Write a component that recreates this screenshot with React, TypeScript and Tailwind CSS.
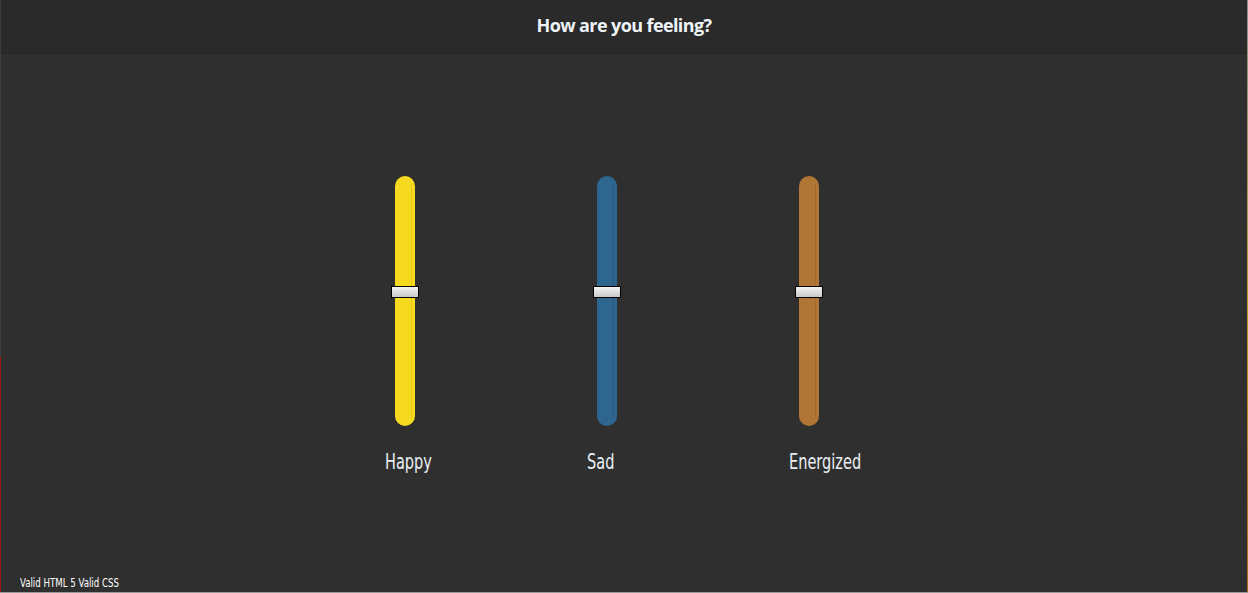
const sliders = [
  { label: "Happy", track: "bg-[#f6da1f]", edge: "bg-[#e6c81a]" },
  { label: "Sad", track: "bg-[#2f6690]", edge: "bg-[#285a80]" },
  { label: "Energized", track: "bg-[#b07635]", edge: "bg-[#a4692a]" },
];

function Slider({ label, track, edge }: { label: string; track: string; edge: string }) {
  return (
    <div className="flex w-[202px] flex-col items-start">
      {/* track */}
      <div className={`relative ml-[10px] h-[250px] w-5 rounded-full ${track}`}>
        <div className={`absolute right-[3px] top-2 bottom-2 w-px ${edge}`} />
        {/* thumb */}
        <div className="absolute left-[-4px] top-[110px] h-3 w-7 border border-black bg-gradient-to-b from-[#f4f4f4] to-[#c9c9c9]" />
      </div>
      <span className="mt-[24px] origin-left scale-x-[0.77] text-[21px] leading-6 text-[#e9eff5] [font-family:'DejaVu_Sans_Condensed','DejaVu_Sans',sans-serif]">
        {label}
      </span>
    </div>
  );
}

export default function App() {
  return (
    <div className="relative flex h-[593px] w-full flex-col bg-[#2f2f2f]">
      {/* Header */}
      <header className="flex h-[54px] shrink-0 items-center justify-center border-b border-[#232323] bg-[#2a2a2a] pb-[3px]">
        <h1 className="text-[18px] font-bold tracking-[-0.6px] text-[#eef3f8] [font-family:'Open_Sans',sans-serif]">
          How are you feeling?
        </h1>
      </header>

      {/* Sliders */}
      <main className="flex flex-1 justify-center pt-[122px] pl-[128px]">
        {sliders.map((s) => (
          <Slider key={s.label} {...s} />
        ))}
      </main>

      <footer className="px-5 pb-[2px] text-[12px] leading-4 text-white [font-family:'DejaVu_Sans_Condensed','DejaVu_Sans',sans-serif]">
        <span className="inline-block origin-left scale-x-[0.8]">Valid HTML 5 Valid CSS</span>
      </footer>

      {/* edge artifacts */}
      <div className="absolute left-0 top-[357px] bottom-0 w-px bg-[#9b1515]" />
      <div className="absolute left-0 top-0 h-[357px] w-px bg-[#3c3c3c]" />
      <div className="absolute right-0 top-0 bottom-0 w-px bg-gradient-to-b from-[#8a8a8a] via-[#b59a2a] to-[#a86a1c]" />
      <div className="absolute left-0 right-0 bottom-0 h-px bg-[#9a9a9a]" />
    </div>
  );
}
